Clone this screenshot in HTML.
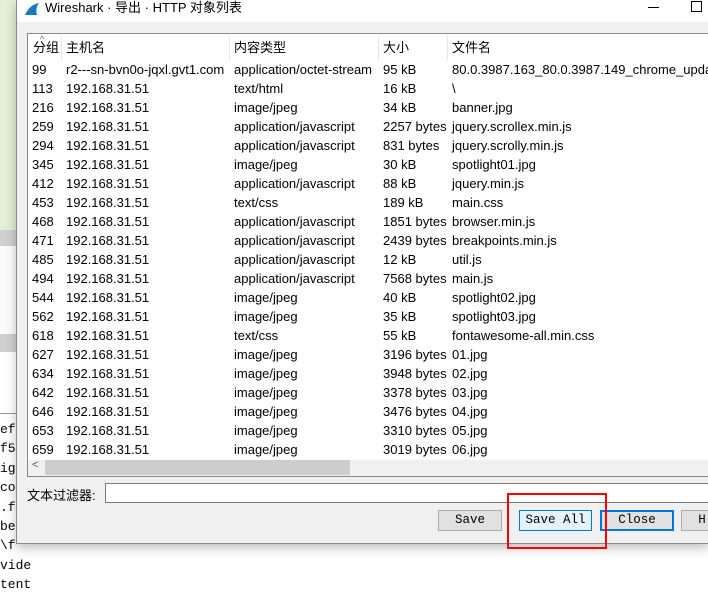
<!DOCTYPE html><html><head><style>
body{margin:0;width:708px;height:582px;overflow:hidden;background:#fff;position:relative;font-family:"Liberation Sans","Noto Sans CJK SC",sans-serif;font-size:13px;color:#000}
.a{position:absolute}
.mono{font-family:"Liberation Mono",monospace;font-size:13px;position:absolute;left:0}
.row{position:absolute;left:0;height:19px;line-height:19px;white-space:nowrap}
.row span{position:absolute}
.btn{position:absolute;top:510px;height:19px;border:1px solid #adadad;background:#e1e1e1;font-family:"Liberation Mono",monospace;font-size:12.5px;text-align:center;line-height:19px}
</style></head><body>
<div class="a" style="left:0;top:0;width:16px;height:230px;background:#e3f0d6"></div>
<div class="a" style="left:0;top:230px;width:16px;height:16px;background:#d0d0d0"></div>
<div class="a" style="left:0;top:246px;width:16px;height:88px;background:#fbfbfb"></div>
<div class="a" style="left:0;top:334px;width:16px;height:18px;background:#d0d0d0"></div>
<div class="a" style="left:0;top:413px;width:16px;height:1px;background:#999"></div>
<div class="mono" style="top:420px;line-height:19.4px">ef<br>f5<br>ig<br>co<br>.f<br>be<br>\f<br>vide<br>tent</div>
<div class="a" style="left:16px;top:0;width:692px;height:543px;background:#f0f0f0;border-left:1px solid #888;border-bottom:1px solid #888;box-shadow:0 4px 10px rgba(0,0,0,.25)"></div>
<div class="a" style="left:17px;top:0;width:691px;height:22px;background:#fff"></div>
<svg class="a" style="left:24px;top:2px" width="16" height="14"><path d="M1 13 C4 6 9 2 15 1 C12 5 12 9 13 13 Z" fill="#1679c5"/></svg>
<div class="a" style="left:45px;top:0;line-height:16px;font-size:13px">Wireshark · 导出 · HTTP 对象列表</div>
<div class="a" style="left:648px;top:7px;width:11px;height:1px;background:#000"></div>
<div class="a" style="left:691px;top:1px;width:9px;height:9px;border:1px solid #000"></div>
<div class="a" style="left:27px;top:33px;width:681px;height:442px;background:#fff;border:1px solid #828790;border-right:none;overflow:hidden">
<div class="row" style="top:2px;height:24px;line-height:24px;width:681px"><span style="left:5px">分组</span><span style="left:38px">主机名</span><span style="left:206px">内容类型</span><span style="left:355px">大小</span><span style="left:424px">文件名</span>
<span style="left:33px;top:0;width:1px;height:24px;background:#e5e5e5"></span><span style="left:201px;width:1px;height:24px;background:#e5e5e5"></span><span style="left:350px;width:1px;height:24px;background:#e5e5e5"></span><span style="left:419px;width:1px;height:24px;background:#e5e5e5"></span></div>
<div class="a" style="left:12px;top:0;font-size:9px;color:#666">^</div>
<div id="rows"></div>
<div class="a" style="left:0;top:426px;width:681px;height:16px;background:#f0f0f0"></div>
<div class="a" style="left:17px;top:426px;width:305px;height:15px;background:#cdcdcd"></div>
<div class="a" style="left:4px;top:425px;font-size:11px;color:#555">&lt;</div>
</div>
<div class="a" style="left:27px;top:485px">文本过滤器:</div>
<div class="a" style="left:105px;top:483px;width:603px;height:18px;background:#fff;border:1px solid #7a7a7a;border-right:none"></div>
<div class="btn" style="left:438px;width:62px">Save</div>
<div class="btn" style="left:519px;width:71px;background:#e5f1fb;border-color:#0078d7">Save All</div>
<div class="btn" style="left:600px;width:70px;border:2px solid #0078d7;height:17px;line-height:17px">Close</div>
<div class="btn" style="left:681px;width:40px">H</div>
<div class="a" style="left:507px;top:493px;width:96px;height:52px;border:2px solid #f00"></div>
<script>
var d=[["99","r2---sn-bvn0o-jqxl.gvt1.com","application/octet-stream","95 kB","80.0.3987.163_80.0.3987.149_chrome_updater.exe"],
["113","192.168.31.51","text/html","16 kB","\\"],["216","192.168.31.51","image/jpeg","34 kB","banner.jpg"],
["259","192.168.31.51","application/javascript","2257 bytes","jquery.scrollex.min.js"],["294","192.168.31.51","application/javascript","831 bytes","jquery.scrolly.min.js"],
["345","192.168.31.51","image/jpeg","30 kB","spotlight01.jpg"],["412","192.168.31.51","application/javascript","88 kB","jquery.min.js"],
["453","192.168.31.51","text/css","189 kB","main.css"],["468","192.168.31.51","application/javascript","1851 bytes","browser.min.js"],
["471","192.168.31.51","application/javascript","2439 bytes","breakpoints.min.js"],["485","192.168.31.51","application/javascript","12 kB","util.js"],
["494","192.168.31.51","application/javascript","7568 bytes","main.js"],["544","192.168.31.51","image/jpeg","40 kB","spotlight02.jpg"],
["562","192.168.31.51","image/jpeg","35 kB","spotlight03.jpg"],["618","192.168.31.51","text/css","55 kB","fontawesome-all.min.css"],
["627","192.168.31.51","image/jpeg","3196 bytes","01.jpg"],["634","192.168.31.51","image/jpeg","3948 bytes","02.jpg"],
["642","192.168.31.51","image/jpeg","3378 bytes","03.jpg"],["646","192.168.31.51","image/jpeg","3476 bytes","04.jpg"],
["653","192.168.31.51","image/jpeg","3310 bytes","05.jpg"],["659","192.168.31.51","image/jpeg","3019 bytes","06.jpg"]];
var x=[4,38,206,355,424],h="";
d.forEach(function(r,i){h+='<div class="row" style="top:'+(26+i*19)+'px">';r.forEach(function(c,j){h+='<span style="left:'+x[j]+'px">'+c+'</span>'});h+='</div>'});
document.getElementById('rows').innerHTML=h;
</script>
</body></html>
